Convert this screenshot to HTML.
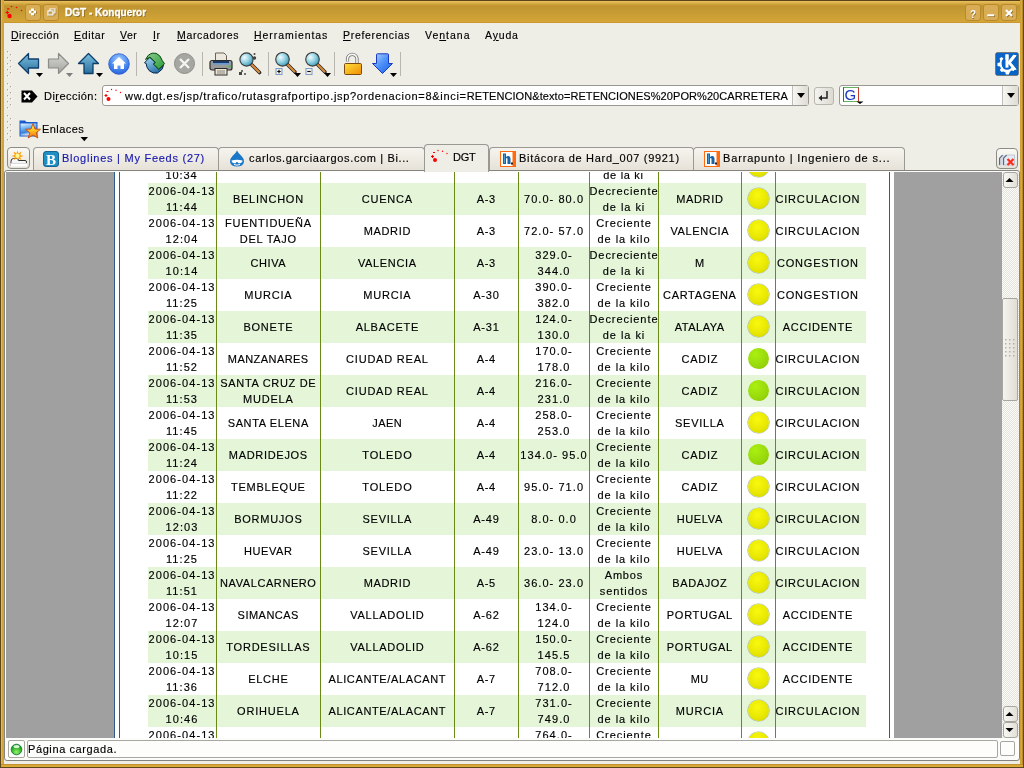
<!DOCTYPE html>
<html><head><meta charset="utf-8">
<style>
*{margin:0;padding:0;box-sizing:border-box}
html,body{width:1024px;height:768px;overflow:hidden;will-change:transform;background:#eeede6;font-family:"Liberation Sans",sans-serif;}
.a{position:absolute}
#title{left:0;top:0;width:1024px;height:23px;background:linear-gradient(#e8c060 0,#e4ba56 1px,#d6aa42 2.5px,#bf942f 5px,#c49a33 10px,#d2a336 19px,#d4a436 21px,#c08c28 22px);border-top:1px solid #5a4418}
.lb{left:0;top:0;width:4px;height:768px;background:linear-gradient(90deg,#5c4818 0,#5c4818 1px,#e2ba58 1px,#e2ba58 2px,#d4a438 2px)}
.rb{left:1020px;top:0;width:4px;height:768px;background:linear-gradient(90deg,#cfa032 0,#cfa032 1px,#d8a838 1px,#d8a838 2px,#b88a2c 2px,#b88a2c 3px,#5c4818 3px)}
.bb{left:1px;top:764px;width:1022px;height:4px;background:linear-gradient(#c49030 0,#c49030 1px,#d8a838 1px,#d8a838 3px,#5c4818 3px)}
.tbtn{top:4px;width:16px;height:17px;border-radius:3px;background:#d8ad55;border:1px solid #b98a2c}
.ttl{left:65px;top:6.5px;-webkit-text-stroke:0.3px #fff;font-weight:bold;font-size:10px;line-height:12px;color:#fff;text-shadow:1px 1px 0 #8a6a22;letter-spacing:0}
.menu{top:29.4px;font-size:10.5px;line-height:12px;color:#000;letter-spacing:0.5px}
.menu u{text-decoration:underline;text-underline-offset:1px}
.sep{top:52px;width:2px;height:24px;border-left:1px solid #bcbab2;border-right:1px solid #fff}
.grip{width:5px;background:repeating-linear-gradient(#c8c6bf 0 1px,transparent 1px 3px)}
/* frame */
#frame{left:4px;top:170px;width:1016px;height:591px;border:1px solid #85847f;border-radius:3px;background:#fcfcfa}
#page{left:6px;top:172px;width:996px;height:566px;background:#a0a0a0;overflow:hidden}
.t{position:absolute;width:140px;text-align:center;font-size:11px;line-height:16px;letter-spacing:0.7px;color:#000;white-space:nowrap;-webkit-text-stroke:0.15px #000}
.t.d{letter-spacing:0.85px}
.rowg{position:absolute;left:148px;width:718px;height:32px;background:#e4f5d8}
.vl{position:absolute;top:0;width:1px;height:768px;background:#6a8a18}
.ball{position:absolute;left:748px;width:21px;height:21px;border-radius:50%;background:radial-gradient(circle at 45% 35%,#f8f810,#e6e600 60%,#cccc00);box-shadow:0 0 0 0.6px #a8b8b8}
.ball.gb{background:radial-gradient(circle at 35% 30%,#aaf010,#98d80c 60%,#88c000);box-shadow:none}

.grip2{width:6px;background-image:radial-gradient(circle at 1px 1px,#b0aea6 0.9px,transparent 1px);background-size:3px 5px}
.sep1{top:52px;width:1px;height:24px;background:#b8b6ae}
.lbl{font-size:11px;letter-spacing:0.45px;color:#000}
.lbl u{text-decoration:underline;text-underline-offset:1px}
.combo{background:#fff;border:1px solid #9a9892;border-radius:3px}
.cbtn{background:linear-gradient(90deg,#f6f5f1,#dedcd4);border-left:1px solid #c0beb6}
.tri{position:absolute;left:4px;top:7px;width:0;height:0;border-left:4px solid transparent;border-right:4px solid transparent;border-top:5px solid #000}
.url{font-size:11px;letter-spacing:0.44px;color:#000;white-space:nowrap;width:666px;overflow:hidden}
.sbtn{border:1px solid #8e8c86;border-radius:4px;background:linear-gradient(#faf9f5,#e4e1d8)}
.tab{top:147px;height:23px;border:1px solid #9a9892;border-bottom:none;border-radius:4px 4px 0 0;background:linear-gradient(#f6f4ee,#e6e2d8)}
.tab.act{top:144px;height:28px;background:#eeede6}
.tabt{top:152px;font-size:11px;letter-spacing:0.7px;color:#000;white-space:nowrap}
.sb{width:15px;border:1px solid #a8a6a0;border-radius:3px;background:linear-gradient(90deg,#f8f7f3,#e2dfd6)}
.thumb{width:16px;border-radius:2px;background:linear-gradient(90deg,#f6f4ee,#e0ddd4)}
.stb{border:1px solid #a8a6a0;border-radius:2px;background:#fdfdfb}
.stt{font-size:11px;letter-spacing:0.6px;color:#000}
.menu,.lbl,.url,.tabt,.stt{-webkit-text-stroke:0.15px currentColor}
#content{position:absolute;left:0;top:0;width:1024px;height:768px}
</style></head><body>
<!-- window frame -->
<div class="a" id="title"></div>
<div class="a lb"></div><div class="a rb"></div><div class="a bb"></div>
<div class="a tbtn" style="left:25px"></div>
<div class="a tbtn" style="left:43px"></div>
<div class="a tbtn" style="left:965px"></div>
<div class="a tbtn" style="left:983px"></div>
<div class="a tbtn" style="left:1001px"></div>
<div class="a ttl">DGT - Konqueror</div>
<svg class="a" style="left:5px;top:5px" width="18" height="14" viewBox="0 0 18 14">
 <circle cx="4.5" cy="11" r="2.2" fill="#f00"/><path d="M0.5 7.5 h3.5 M2.3 5.8 v3.4" stroke="#f00" stroke-width="1.2"/>
 <rect x="2" y="3.3" width="2.5" height="1.2" fill="#f00"/><circle cx="6.5" cy="1.5" r="0.8" fill="#f00"/><circle cx="11.5" cy="2.5" r="0.8" fill="#f00"/><circle cx="16.5" cy="5.5" r="0.8" fill="#f00"/>
</svg>
<svg class="a" style="left:25px;top:4px" width="16" height="16" viewBox="0 0 16 16">
 <path d="M6 4.5 h3 v2 h2 v3 h-2 v2 h-3 v-2 h-2 v-3 h2 Z M6.5 7 v2 h2 v-2 Z" fill="#8a6a22" transform="translate(0.6,0.6)"/>
 <path d="M6 4.5 h3 v2 h2 v3 h-2 v2 h-3 v-2 h-2 v-3 h2 Z M6.5 7 v2 h2 v-2 Z" fill="#fff" fill-rule="evenodd"/>
</svg>
<svg class="a" style="left:43px;top:4px" width="16" height="16" viewBox="0 0 16 16">
 <g transform="translate(0.6,0.6)" fill="none" stroke="#8a6a22" stroke-width="1.2"><rect x="5" y="7" width="5" height="4"/><path d="M7 7 V5 h5 v4 h-2"/></g>
 <g fill="none" stroke="#fff" stroke-width="1.2"><rect x="5" y="7" width="5" height="4"/><path d="M7 7 V5 h5 v4 h-2"/></g>
</svg>
<svg class="a" style="left:965px;top:4.5px" width="16" height="16" viewBox="0 0 16 16">
 <text x="8.6" y="13.6" text-anchor="middle" font-family="Liberation Sans" font-weight="bold" font-size="10" fill="#8a6a22">?</text>
 <text x="8" y="13" text-anchor="middle" font-family="Liberation Sans" font-weight="bold" font-size="10" fill="#fff">?</text>
</svg>
<svg class="a" style="left:983px;top:4.5px" width="16" height="16" viewBox="0 0 16 16">
 <rect x="5" y="10" width="7" height="2" fill="#8a6a22"/><rect x="4.3" y="9.3" width="7" height="2" fill="#fff"/>
</svg>
<svg class="a" style="left:1001px;top:4.5px" width="16" height="16" viewBox="0 0 16 16">
 <path d="M5 5 L11 11 M11 5 L5 11" stroke="#8a6a22" stroke-width="2.2" transform="translate(0.7,0.7)"/>
 <path d="M5 5 L11 11 M11 5 L5 11" stroke="#fff" stroke-width="2.2"/>
</svg>

<!-- menu -->
<div class="a menu" style="left:11px"><u>D</u>irección</div>
<div class="a menu" style="left:74px;letter-spacing:0.67px"><u>E</u>ditar</div>
<div class="a menu" style="left:120px"><u>V</u>er</div>
<div class="a menu" style="left:153px"><u>I</u>r</div>
<div class="a menu" style="left:177px;letter-spacing:0.67px"><u>M</u>arcadores</div>
<div class="a menu" style="left:254px;letter-spacing:0.94px"><u>H</u>erramientas</div>
<div class="a menu" style="left:343px;letter-spacing:0.69px"><u>P</u>referencias</div>
<div class="a menu" style="left:425px;letter-spacing:1.0px">Ve<u>n</u>tana</div>
<div class="a menu" style="left:485px;letter-spacing:0.82px">A<u>y</u>uda</div>
<!-- grips -->
<svg class="a" style="left:6px;top:51px" width="7" height="27" viewBox="0 0 7 27"><rect x="1" y="0" width="1" height="1" fill="#a4a29a"/><rect x="2" y="1" width="1" height="1" fill="#ffffff"/><rect x="1" y="1" width="1" height="1" fill="#d8d6ce"/><rect x="4" y="3" width="1" height="1" fill="#a4a29a"/><rect x="5" y="4" width="1" height="1" fill="#ffffff"/><rect x="4" y="4" width="1" height="1" fill="#d8d6ce"/><rect x="1" y="6" width="1" height="1" fill="#a4a29a"/><rect x="2" y="7" width="1" height="1" fill="#ffffff"/><rect x="1" y="7" width="1" height="1" fill="#d8d6ce"/><rect x="4" y="9" width="1" height="1" fill="#a4a29a"/><rect x="5" y="10" width="1" height="1" fill="#ffffff"/><rect x="4" y="10" width="1" height="1" fill="#d8d6ce"/><rect x="1" y="12" width="1" height="1" fill="#a4a29a"/><rect x="2" y="13" width="1" height="1" fill="#ffffff"/><rect x="1" y="13" width="1" height="1" fill="#d8d6ce"/><rect x="4" y="15" width="1" height="1" fill="#a4a29a"/><rect x="5" y="16" width="1" height="1" fill="#ffffff"/><rect x="4" y="16" width="1" height="1" fill="#d8d6ce"/><rect x="1" y="18" width="1" height="1" fill="#a4a29a"/><rect x="2" y="19" width="1" height="1" fill="#ffffff"/><rect x="1" y="19" width="1" height="1" fill="#d8d6ce"/><rect x="4" y="21" width="1" height="1" fill="#a4a29a"/><rect x="5" y="22" width="1" height="1" fill="#ffffff"/><rect x="4" y="22" width="1" height="1" fill="#d8d6ce"/><rect x="1" y="24" width="1" height="1" fill="#a4a29a"/><rect x="2" y="25" width="1" height="1" fill="#ffffff"/><rect x="1" y="25" width="1" height="1" fill="#d8d6ce"/></svg>
<svg class="a" style="left:6px;top:83px" width="7" height="27" viewBox="0 0 7 27"><rect x="1" y="0" width="1" height="1" fill="#a4a29a"/><rect x="2" y="1" width="1" height="1" fill="#ffffff"/><rect x="1" y="1" width="1" height="1" fill="#d8d6ce"/><rect x="4" y="3" width="1" height="1" fill="#a4a29a"/><rect x="5" y="4" width="1" height="1" fill="#ffffff"/><rect x="4" y="4" width="1" height="1" fill="#d8d6ce"/><rect x="1" y="6" width="1" height="1" fill="#a4a29a"/><rect x="2" y="7" width="1" height="1" fill="#ffffff"/><rect x="1" y="7" width="1" height="1" fill="#d8d6ce"/><rect x="4" y="9" width="1" height="1" fill="#a4a29a"/><rect x="5" y="10" width="1" height="1" fill="#ffffff"/><rect x="4" y="10" width="1" height="1" fill="#d8d6ce"/><rect x="1" y="12" width="1" height="1" fill="#a4a29a"/><rect x="2" y="13" width="1" height="1" fill="#ffffff"/><rect x="1" y="13" width="1" height="1" fill="#d8d6ce"/><rect x="4" y="15" width="1" height="1" fill="#a4a29a"/><rect x="5" y="16" width="1" height="1" fill="#ffffff"/><rect x="4" y="16" width="1" height="1" fill="#d8d6ce"/><rect x="1" y="18" width="1" height="1" fill="#a4a29a"/><rect x="2" y="19" width="1" height="1" fill="#ffffff"/><rect x="1" y="19" width="1" height="1" fill="#d8d6ce"/><rect x="4" y="21" width="1" height="1" fill="#a4a29a"/><rect x="5" y="22" width="1" height="1" fill="#ffffff"/><rect x="4" y="22" width="1" height="1" fill="#d8d6ce"/><rect x="1" y="24" width="1" height="1" fill="#a4a29a"/><rect x="2" y="25" width="1" height="1" fill="#ffffff"/><rect x="1" y="25" width="1" height="1" fill="#d8d6ce"/></svg>
<svg class="a" style="left:6px;top:115px" width="7" height="28" viewBox="0 0 7 28"><rect x="1" y="0" width="1" height="1" fill="#a4a29a"/><rect x="2" y="1" width="1" height="1" fill="#ffffff"/><rect x="1" y="1" width="1" height="1" fill="#d8d6ce"/><rect x="4" y="3" width="1" height="1" fill="#a4a29a"/><rect x="5" y="4" width="1" height="1" fill="#ffffff"/><rect x="4" y="4" width="1" height="1" fill="#d8d6ce"/><rect x="1" y="6" width="1" height="1" fill="#a4a29a"/><rect x="2" y="7" width="1" height="1" fill="#ffffff"/><rect x="1" y="7" width="1" height="1" fill="#d8d6ce"/><rect x="4" y="9" width="1" height="1" fill="#a4a29a"/><rect x="5" y="10" width="1" height="1" fill="#ffffff"/><rect x="4" y="10" width="1" height="1" fill="#d8d6ce"/><rect x="1" y="12" width="1" height="1" fill="#a4a29a"/><rect x="2" y="13" width="1" height="1" fill="#ffffff"/><rect x="1" y="13" width="1" height="1" fill="#d8d6ce"/><rect x="4" y="15" width="1" height="1" fill="#a4a29a"/><rect x="5" y="16" width="1" height="1" fill="#ffffff"/><rect x="4" y="16" width="1" height="1" fill="#d8d6ce"/><rect x="1" y="18" width="1" height="1" fill="#a4a29a"/><rect x="2" y="19" width="1" height="1" fill="#ffffff"/><rect x="1" y="19" width="1" height="1" fill="#d8d6ce"/><rect x="4" y="21" width="1" height="1" fill="#a4a29a"/><rect x="5" y="22" width="1" height="1" fill="#ffffff"/><rect x="4" y="22" width="1" height="1" fill="#d8d6ce"/><rect x="1" y="24" width="1" height="1" fill="#a4a29a"/><rect x="2" y="25" width="1" height="1" fill="#ffffff"/><rect x="1" y="25" width="1" height="1" fill="#d8d6ce"/></svg>
<!-- back -->
<svg class="a" style="left:17px;top:52px" width="28" height="26" viewBox="0 0 28 26">
 <defs>
  <linearGradient id="gb" x1="0" y1="0" x2="0" y2="1"><stop offset="0" stop-color="#7cc0e0"/><stop offset="1" stop-color="#2a6f9e"/></linearGradient>
  <linearGradient id="gg" x1="0" y1="0" x2="0" y2="1"><stop offset="0" stop-color="#d6d6d2"/><stop offset="1" stop-color="#a4a4a0"/></linearGradient>
 </defs>
 <path d="M1.5 11.5 L11.5 1.5 L11.5 7 L21.5 7 L21.5 16 L11.5 16 L11.5 21.5 Z" fill="url(#gb)" stroke="#0f3f6a" stroke-width="1.3" stroke-linejoin="round"/>
 <path d="M19 21 L26 21 L22.5 25 Z" fill="#000"/>
</svg>
<!-- forward -->
<svg class="a" style="left:47px;top:52px" width="28" height="26" viewBox="0 0 28 26">
 <path d="M21.5 11.5 L11.5 1.5 L11.5 7 L1.5 7 L1.5 16 L11.5 16 L11.5 21.5 Z" fill="url(#gg)" stroke="#8c8c88" stroke-width="1.2" stroke-linejoin="round"/>
 <path d="M19 21 L26 21 L22.5 25 Z" fill="#808080"/>
</svg>
<!-- up -->
<svg class="a" style="left:77px;top:52px" width="28" height="26" viewBox="0 0 28 26">
 <path d="M11.5 1.5 L21.5 11.5 L16 11.5 L16 21.5 L7 21.5 L7 11.5 L1.5 11.5 Z" fill="url(#gb)" stroke="#0f3f6a" stroke-width="1.3" stroke-linejoin="round"/>
 <path d="M19 21 L26 21 L22.5 25 Z" fill="#000"/>
</svg>
<!-- home -->
<svg class="a" style="left:108px;top:53px" width="22" height="22" viewBox="0 0 22 22">
 <defs><radialGradient id="gh" cx="0.5" cy="0.3" r="0.7"><stop offset="0" stop-color="#a8d0ff"/><stop offset="0.6" stop-color="#4a8cf0"/><stop offset="1" stop-color="#2a62d8"/></radialGradient></defs>
 <circle cx="11" cy="11" r="10.3" fill="url(#gh)" stroke="#2a5ad0" stroke-width="0.8"/>
 <path d="M11 4 L18 10.5 L16 10.5 L16 16 L12.5 16 L12.5 12.5 L9.5 12.5 L9.5 16 L6 16 L6 10.5 L4 10.5 Z" fill="#fff"/>
</svg>
<div class="a sep1" style="left:136px"></div>
<!-- reload -->
<svg class="a" style="left:142px;top:51px" width="26" height="26" viewBox="0 0 26 26">
 <defs><linearGradient id="grn" x1="0" y1="0" x2="1" y2="1"><stop offset="0" stop-color="#8ccc8c"/><stop offset="1" stop-color="#2a9a3a"/></linearGradient>
 <linearGradient id="blu" x1="0" y1="0" x2="0.6" y2="1"><stop offset="0" stop-color="#a8dcf4"/><stop offset="1" stop-color="#2a70a8"/></linearGradient></defs>
 <path d="M2.5 11.8 L7.8 6.4 L13.3 11.5 L11.3 13 L16.9 18.3 L21.5 14.2 Q21.5 18.5 15.5 22 Q11 23 7 19.5 Q4.2 16 4.2 12.5 Z" fill="url(#blu)" stroke="#06284a" stroke-width="1" stroke-linejoin="round"/>
 <path d="M3.5 8.5 Q6 3 10 2.2 L14 2.3 Q18.5 4 20.3 9.5 L22.5 12.7 L16.9 18.3 L11.5 13.2 L13.5 11.5 L8 6.2 Z" fill="url(#grn)" stroke="#064a10" stroke-width="1" stroke-linejoin="round"/>
</svg>
<!-- stop -->
<svg class="a" style="left:174px;top:53px" width="21" height="21" viewBox="0 0 21 21">
 <circle cx="10.5" cy="10.5" r="10" fill="#a6a6a2" stroke="#8e8e8a" stroke-width="1"/>
 <path d="M6 6 L15 15 M15 6 L6 15" stroke="#f4f4f2" stroke-width="2.4"/>
</svg>
<div class="a sep1" style="left:202px"></div>
<!-- print -->
<svg class="a" style="left:209px;top:52px" width="24" height="24" viewBox="0 0 24 24">
 <path d="M6.5 1 L15 1 L17.5 3.5 L17.5 10 L6.5 10 Z" fill="#ece8de" stroke="#6a6258" stroke-width="1"/>
 <rect x="1" y="8.5" width="22" height="9.5" rx="2" fill="#9a9a9a" stroke="#2a2a2a" stroke-width="1.2"/>
 <rect x="4" y="9" width="16" height="2.2" fill="#1a3a6a"/>
 <rect x="4" y="11" width="16" height="1.6" fill="#6a9ad0"/>
 <rect x="19.5" y="13.5" width="2" height="2" fill="#40c040"/>
 <rect x="6" y="16.5" width="12" height="6.5" fill="#efe6d4" stroke="#2a2a2a" stroke-width="1"/>
 <path d="M8 19 L16 19 M8 21 L16 21" stroke="#6a6a6a" stroke-width="0.8"/>
</svg>
<!-- find -->
<svg class="a" style="left:238px;top:52px" width="24" height="24" viewBox="0 0 24 24">
 <defs><radialGradient id="gl" cx="0.35" cy="0.35" r="0.7"><stop offset="0" stop-color="#f0fcff"/><stop offset="0.5" stop-color="#9ad4e4"/><stop offset="1" stop-color="#3a9ab8"/></radialGradient></defs>
 <path d="M14 13 L21.5 20.5" stroke="#2a2a2a" stroke-width="3.6" stroke-linecap="round"/>
 <path d="M14 13 L21 20" stroke="#d8893a" stroke-width="2.2" stroke-linecap="round"/>
 <circle cx="8.5" cy="7.5" r="6.6" fill="url(#gl)" stroke="#3a3a3a" stroke-width="1.1"/>
 <circle cx="16.5" cy="2" r="1" fill="#444"/><circle cx="16.5" cy="6" r="1.7" fill="#444"/>
 <circle cx="4" cy="19" r="1" fill="#444"/><rect x="1" y="20" width="3" height="3" fill="#444"/><circle cx="7" cy="22" r="1" fill="#444"/>
</svg>
<div class="a sep1" style="left:268px"></div>
<!-- zoom in -->
<svg class="a" style="left:274px;top:52px" width="28" height="26" viewBox="0 0 28 26">
 <path d="M13.5 12.5 L21 20" stroke="#2a2a2a" stroke-width="3.6" stroke-linecap="round"/>
 <path d="M13.5 12.5 L20.5 19.5" stroke="#d8893a" stroke-width="2.2" stroke-linecap="round"/>
 <circle cx="8.5" cy="7.3" r="6.8" fill="url(#gl)" stroke="#3a3a3a" stroke-width="1.1"/>
 <rect x="2" y="16.5" width="6" height="6" fill="#f4f0e8" stroke="#7a9ac8" stroke-width="1"/>
 <path d="M3.3 19.5 L6.7 19.5 M5 17.8 L5 21.2" stroke="#000" stroke-width="1.1"/>
 <path d="M20 21 L27 21 L23.5 25 Z" fill="#000"/>
</svg>
<!-- zoom out -->
<svg class="a" style="left:304px;top:52px" width="28" height="26" viewBox="0 0 28 26">
 <path d="M13.5 12.5 L21 20" stroke="#2a2a2a" stroke-width="3.6" stroke-linecap="round"/>
 <path d="M13.5 12.5 L20.5 19.5" stroke="#d8893a" stroke-width="2.2" stroke-linecap="round"/>
 <circle cx="8.5" cy="7.3" r="6.8" fill="url(#gl)" stroke="#3a3a3a" stroke-width="1.1"/>
 <rect x="2" y="16.5" width="6" height="6" fill="#f4f0e8" stroke="#7a9ac8" stroke-width="1"/>
 <path d="M3.3 19.5 L6.7 19.5" stroke="#000" stroke-width="1.1"/>
 <path d="M20 21 L27 21 L23.5 25 Z" fill="#000"/>
</svg>
<div class="a sep1" style="left:334px"></div>
<!-- lock -->
<svg class="a" style="left:343px;top:52px" width="20" height="24" viewBox="0 0 20 24">
 <defs><linearGradient id="gk" x1="0" y1="0" x2="1" y2="1"><stop offset="0" stop-color="#ffe040"/><stop offset="1" stop-color="#f08c00"/></linearGradient></defs>
 <path d="M4.5 9.5 L4.5 6.5 A4.8 4.8 0 0 1 14 6.5 L14 11.5" fill="none" stroke="#707070" stroke-width="3.2"/>
 <path d="M4.5 9.5 L4.5 6.5 A4.8 4.8 0 0 1 14 6.5 L14 11.5" fill="none" stroke="#f6f6f6" stroke-width="1.6"/>
 <rect x="1.5" y="11.5" width="17" height="11" rx="1.2" fill="url(#gk)" stroke="#7a4a10" stroke-width="1"/>
</svg>
<!-- download -->
<svg class="a" style="left:372px;top:53px" width="27" height="25" viewBox="0 0 27 25">
 <defs><linearGradient id="gd" x1="0" y1="0" x2="1" y2="1"><stop offset="0" stop-color="#b8d8ff"/><stop offset="0.5" stop-color="#4a90f8"/><stop offset="1" stop-color="#1a5ae0"/></linearGradient></defs>
 <path d="M4.5 1.5 Q4.5 0.8 5.5 0.8 L15.5 0.8 Q16.5 0.8 16.5 1.5 L16.5 10.5 L20.5 10.5 L10.5 20.5 L0.5 10.5 L4.5 10.5 Z" fill="url(#gd)" stroke="#1a3ac0" stroke-width="1"/>
 <path d="M18 20 L25 20 L21.5 24 Z" fill="#000"/>
</svg>
<div class="a sep1" style="left:400px"></div>
<!-- KDE logo -->
<svg class="a" style="left:995px;top:52px" width="24" height="24" viewBox="0 0 24 24">
 <rect x="0.5" y="0.5" width="23" height="23" rx="2" fill="#0a64c8" stroke="#6a5a40" stroke-width="0.6"/>
 <path d="M10.5 2.5 L13.5 2.5 L13.5 9 L18.5 2.8 L21.5 3.6 L16 10.5 L21.5 17.5 L18.5 18 L13.5 12 L13.5 15.5 L10.5 15.8 Z" fill="#fff"/>
 <path d="M6.5 5 L8.5 6.5 A7 7 0 0 0 7.5 14.5 A6 6 0 0 0 17 14.8 L19.5 16.5 L19 19 L16 18.5 L14.5 20.5 L13.8 22.5 L10.8 22.5 L10.5 20.5 L8.5 19.5 L6.5 20 L4.8 18 L6 16.3 L5 14.5 L2.5 14 L2.5 11 L4.8 10.5 L5.2 8.5 L4.5 6.5 Z" fill="#fff"/>
 <circle cx="12" cy="12.5" r="5.2" fill="#0a64c8"/>
 <path d="M10.5 2.5 L13.5 2.5 L13.5 9 L18.5 2.8 L21.5 3.6 L16 10.5 L21.5 17.5 L18.5 18 L13.5 12 L13.5 15.5 L10.5 15.8 Z" fill="#fff"/>
</svg>
<!-- location bar -->
<svg class="a" style="left:21px;top:90px" width="17" height="13" viewBox="0 0 17 13">
 <path d="M0.5 0.5 L11 0.5 L16.5 6.5 L11 12.5 L0.5 12.5 Z" fill="#000"/>
 <path d="M3 3 L9 9.5 M9 3 L3 9.5" stroke="#fff" stroke-width="2"/>
</svg>
<div class="a lbl" style="left:44px;top:90px">Di<u>r</u>ección:</div>
<div class="a combo" style="left:102px;top:85px;width:707px;height:21px"></div>
<div class="a cbtn" style="left:792px;top:86px;width:16px;height:19px"><div class="tri"></div></div>
<svg class="a" style="left:104px;top:88px" width="18" height="14" viewBox="0 0 18 14">
 <circle cx="4.5" cy="11" r="2" fill="#f00"/><path d="M0.5 7.5 h3 M2 6 v3" stroke="#f00" stroke-width="1.1"/>
 <rect x="2.5" y="3" width="2" height="1" fill="#f00"/><circle cx="7.5" cy="1.5" r="0.7" fill="#f00"/><circle cx="12" cy="2.3" r="0.7" fill="#f00"/><circle cx="16.5" cy="4.5" r="0.7" fill="#f00"/>
</svg>
<div class="a url" style="left:125px;top:90px"><span style="letter-spacing:0.7px">ww.dgt.es/jsp/trafico/rutasgrafportipo.jsp?ordenacion=8&amp;inci=</span><span style="letter-spacing:0.08px">RETENCION&amp;texto=RETENCIONES%20POR%20CARRETERA</span></div>
<div class="a cbtn" style="left:814px;top:87px;width:20px;height:18px;border-radius:3px;border:1px solid #b8b6ae;background:linear-gradient(90deg,#f4f3ef,#dcdad2)"></div>
<svg class="a" style="left:817px;top:90px" width="14" height="13" viewBox="0 0 14 13"><path d="M10 1 L10 8 L3.5 8" fill="none" stroke="#222" stroke-width="1.5"/><path d="M1.5 8 L5 5 L5 11 Z" fill="#222"/></svg>
<div class="a combo" style="left:839px;top:85px;width:180px;height:21px"></div>
<div class="a cbtn" style="left:1002px;top:86px;width:16px;height:19px"><div class="tri"></div></div>
<svg class="a" style="left:843px;top:87px" width="22" height="17" viewBox="0 0 22 17">
 <rect x="0.5" y="0.5" width="15" height="14" fill="none" stroke="#3aa03a" stroke-width="0.8"/>
 <path d="M15.5 0.5 V15" stroke="#e02020" stroke-width="0.8"/>
 <path d="M0.5 0.5 V14.5" stroke="#2040e0" stroke-width="0.8"/>
 <text x="1.6" y="13" font-family="Liberation Sans" font-size="15" fill="#1a38c0">G</text>
 <path d="M13.5 14.5 L20.5 14.5 L17 17 Z" fill="#000"/>
</svg>
<!-- bookmarks bar -->
<svg class="a" style="left:18px;top:119px" width="24" height="20" viewBox="0 0 24 20">
 <defs><linearGradient id="gf" x1="0" y1="0" x2="0.3" y2="1"><stop offset="0" stop-color="#e8f4ff"/><stop offset="0.45" stop-color="#6ab0f0"/><stop offset="0.75" stop-color="#3a80d8"/><stop offset="1" stop-color="#e8eef8"/></linearGradient>
 <linearGradient id="gst" x1="0" y1="0" x2="0" y2="1"><stop offset="0" stop-color="#fff060"/><stop offset="0.5" stop-color="#ffc020"/><stop offset="1" stop-color="#f07010"/></linearGradient></defs>
 <path d="M1.5 1.5 L7 1.5 L8.5 3 L19.5 3 L19.5 17.5 L1.5 17.5 Z" fill="#1a5ad0"/>
 <path d="M2.5 4.5 L18.5 4.5 L18.5 16.5 L2.5 16.5 Z" fill="url(#gf)"/>
 <path d="M15 4.5 L17 10 L22.5 10.3 L18.2 13.7 L19.8 19 L15 16 L10.2 19 L11.8 13.7 L7.5 10.3 L13 10 Z" fill="url(#gst)" stroke="#c84810" stroke-width="0.9" stroke-linejoin="round"/>
</svg>
<div class="a lbl" style="left:42px;top:122.5px">Enlaces</div>
<svg class="a" style="left:80px;top:137px" width="9" height="5" viewBox="0 0 9 5"><path d="M0.5 0 L8 0 L4.3 4.2 Z" fill="#000"/></svg>
<!-- frame -->
<div class="a" id="frame"></div>
<!-- tab bar -->
<div class="a sbtn" style="left:7px;top:147px;width:23px;height:22px"></div>
<svg class="a" style="left:9px;top:149px" width="19" height="18" viewBox="0 0 19 18">
 <path d="M2 17 L2 12.5 Q2 9.5 4.5 9.5 L7.5 9.5 Q9 9.5 9.5 11 L9.5 11.5 L16 11.5 Q17.5 11.5 17.5 13 L17.5 14" fill="#f8f8f8" stroke="#333" stroke-width="1"/>
 <path d="M1.5 14 L18 14 L18 17.5 L1.5 17.5 Z" fill="#ffffff"/>
 <path d="M1.5 14.3 L18 14.3" stroke="#c8c8c8" stroke-width="0.8"/>
 <path d="M8.5 1.5 L9.5 4.5 L12.5 2.5 L11.2 6 L14.5 7 L11.2 8 L12.2 11 L9.5 9.2 L8.5 12 L7.5 9.2 L4.8 11 L5.8 8 L2.5 7 L5.8 6 L4.5 2.5 L7.5 4.5 Z" fill="#ff9a00"/>
 <circle cx="8.5" cy="6.8" r="2.2" fill="#fff890"/>
</svg>
<div class="a tab" style="left:33px;width:186px"></div>
<div class="a tab" style="left:218px;width:207px"></div>
<div class="a tab" style="left:489px;width:205px"></div>
<div class="a tab" style="left:693px;width:212px"></div>
<div class="a tab act" style="left:424px;width:65px"></div>
<!-- tab icons -->
<svg class="a" style="left:43px;top:151px" width="16" height="16" viewBox="0 0 16 16">
 <rect x="0.5" y="0.5" width="15" height="15" rx="2.5" fill="#1e90c4" stroke="#0a5a8a" stroke-width="0.9"/>
 <text x="8" y="13.5" text-anchor="middle" font-family="Liberation Serif" font-weight="bold" font-size="15" fill="#fff">B</text>
</svg>
<div class="a tabt" style="left:62px;color:#1818b0;letter-spacing:0.74px">Bloglines | My Feeds (27)</div>
<svg class="a" style="left:229px;top:150px" width="16" height="17" viewBox="0 0 16 17">
 <path d="M8 0.5 Q9 3 12.5 6 Q15.5 9 15 12 Q14 16.5 8 16.5 Q2 16.5 1 12 Q0.5 9 3.5 6 Q7 3 8 0.5 Z" fill="#1a78c8"/>
 <path d="M2.5 10.5 Q8 9 13.5 10.5 L13 12.5 Q8 11.5 3 12.5 Z" fill="#fff"/>
 <rect x="4" y="11" width="3.2" height="2.2" rx="0.8" fill="#fff"/><rect x="8.8" y="11" width="3.2" height="2.2" rx="0.8" fill="#fff"/>
 <path d="M5 14.5 Q8 15.8 11 14.5" stroke="#fff" stroke-width="1" fill="none"/>
</svg>
<div class="a tabt" style="left:249px;letter-spacing:0.63px">carlos.garciaargos.com | Bi...</div>
<svg class="a" style="left:430px;top:149px" width="19" height="14" viewBox="0 0 18 14">
 <circle cx="4.5" cy="11" r="2" fill="#f00"/><path d="M0.5 7.5 h3 M2 6 v3" stroke="#f00" stroke-width="1.1"/>
 <rect x="2.5" y="3" width="2" height="1" fill="#f00"/><circle cx="7.5" cy="1.5" r="0.7" fill="#f00"/><circle cx="12" cy="2.3" r="0.7" fill="#f00"/><circle cx="16.5" cy="4.5" r="0.7" fill="#f00"/>
</svg>
<div class="a tabt" style="left:453px;top:151px;letter-spacing:-0.3px">DGT</div>
<svg class="a" style="left:500px;top:151px" width="16" height="16" viewBox="0 0 16 16">
 <rect x="0" y="0" width="16" height="16" fill="#ff6a10"/>
 <rect x="1" y="1" width="11.5" height="14" fill="#fff"/>
 <path d="M3 2.5 H6 V6 Q7 5 8.5 5 Q10.5 5 10.5 7.5 V13 H7.5 V8 Q7.5 7 6.8 7 Q6 7 6 8 V13 H3 Z" fill="#1a62a0"/>
 <rect x="4.2" y="3.5" width="0.8" height="8.5" fill="#58a8e0"/>
 <rect x="11" y="11.5" width="2" height="2" fill="#3a1a08"/>
</svg>
<div class="a tabt" style="left:519px;letter-spacing:0.70px">Bitácora de Hard_007 (9921)</div>
<svg class="a" style="left:704px;top:151px" width="16" height="16" viewBox="0 0 16 16">
 <rect x="0" y="0" width="16" height="16" fill="#ff6a10"/>
 <rect x="1" y="1" width="11.5" height="14" fill="#fff"/>
 <path d="M3 2.5 H6 V6 Q7 5 8.5 5 Q10.5 5 10.5 7.5 V13 H7.5 V8 Q7.5 7 6.8 7 Q6 7 6 8 V13 H3 Z" fill="#1a62a0"/>
 <rect x="4.2" y="3.5" width="0.8" height="8.5" fill="#58a8e0"/>
 <rect x="11" y="11.5" width="2" height="2" fill="#3a1a08"/>
</svg>
<div class="a tabt" style="left:723px;letter-spacing:0.84px">Barrapunto | Ingeniero de s...</div>
<div class="a sbtn" style="left:996px;top:148px;width:22px;height:21px"></div>
<svg class="a" style="left:998px;top:152px" width="18" height="14" viewBox="0 0 18 14">
 <path d="M1.5 13 V6 L4.5 3 H16.5 V13 Z" fill="#d4dae4"/>
 <path d="M5.5 13 V6 L8.5 3 H16.5 V13 Z" fill="#e4eaf2" stroke="#a8b4c8" stroke-width="0.6"/>
 <path d="M1.6 13 V6.2 L4.6 3.2" stroke="#56647e" stroke-width="1.1" fill="none"/>
 <path d="M5.6 13 V6.2 L8.6 3.2" stroke="#56647e" stroke-width="1.1" fill="none"/>
 <path d="M9.5 7 L15.5 13 M15.5 7 L9.5 13" stroke="#ff2a1a" stroke-width="2.2"/>
</svg>

<div class="a" id="page">
  <div class="a" style="left:108px;top:0;width:780px;height:600px;background:#fff;border-left:1px solid #2f5d8a"></div>
  <div class="a" style="left:113px;top:0;width:1px;height:600px;background:#2f5d8a"></div>
  <div class="a" style="left:883px;top:0;width:1px;height:600px;background:#2f5d8a"></div>
  <div class="a" style="left:-6px;top:-172px;width:1024px;height:768px">
<div class="rowg" style="top:183px"></div>
<div class="rowg" style="top:247px"></div>
<div class="rowg" style="top:311px"></div>
<div class="rowg" style="top:375px"></div>
<div class="rowg" style="top:439px"></div>
<div class="rowg" style="top:503px"></div>
<div class="rowg" style="top:567px"></div>
<div class="rowg" style="top:631px"></div>
<div class="rowg" style="top:695px"></div>
<div class="vl" style="left:216px"></div>
<div class="vl" style="left:320px"></div>
<div class="vl" style="left:454px"></div>
<div class="vl" style="left:518px"></div>
<div class="vl" style="left:589px"></div>
<div class="vl" style="left:658px"></div>
<div class="vl" style="left:741px"></div>
<div class="vl" style="left:775px"></div>
<div class="t d" style="left:111.5px;top:151px"><br>10:34</div>
<div class="t" style="left:553.5px;top:151px"><br>de la ki</div>
<div class="ball" style="top:156px"></div>
<div class="t d" style="left:111.5px;top:183px"><span style="letter-spacing:1.077px;margin-right:-1.077px">2006-04-13</span><br><span style="letter-spacing:1.074px;margin-right:-1.074px">11:44</span></div>
<div class="t " style="left:198px;top:191px"><span style="letter-spacing:0.75px;margin-right:-0.75px">BELINCHON</span></div>
<div class="t " style="left:317px;top:191px"><span style="letter-spacing:0.779px;margin-right:-0.779px">CUENCA</span></div>
<div class="t " style="left:416px;top:191px"><span style="letter-spacing:0.665px;margin-right:-0.665px">A-3</span></div>
<div class="t " style="left:483.5px;top:191px"><span style="letter-spacing:1.057px;margin-right:-1.057px">70.0- 80.0</span></div>
<div class="t " style="left:553.5px;top:183px"><span style="letter-spacing:0.937px;margin-right:-0.937px">Decreciente</span><br><span style="letter-spacing:0.961px;margin-right:-0.961px">de la ki</span></div>
<div class="t " style="left:629.5px;top:191px"><span style="letter-spacing:0.665px;margin-right:-0.665px">MADRID</span></div>
<div class="t " style="left:747.5px;top:191px"><span style="letter-spacing:0.836px;margin-right:-0.836px">CIRCULACION</span></div>
<div class="ball" style="top:188px"></div>
<div class="t d" style="left:111.5px;top:215px"><span style="letter-spacing:1.077px;margin-right:-1.077px">2006-04-13</span><br><span style="letter-spacing:1.074px;margin-right:-1.074px">12:04</span></div>
<div class="t " style="left:198px;top:215px"><span style="letter-spacing:0.779px;margin-right:-0.779px">FUENTIDUEÑA</span><br><span style="letter-spacing:0.746px;margin-right:-0.746px">DEL TAJO</span></div>
<div class="t " style="left:317px;top:223px"><span style="letter-spacing:0.665px;margin-right:-0.665px">MADRID</span></div>
<div class="t " style="left:416px;top:223px"><span style="letter-spacing:0.665px;margin-right:-0.665px">A-3</span></div>
<div class="t " style="left:483.5px;top:223px"><span style="letter-spacing:1.057px;margin-right:-1.057px">72.0- 57.0</span></div>
<div class="t " style="left:553.5px;top:215px"><span style="letter-spacing:0.936px;margin-right:-0.936px">Creciente</span><br><span style="letter-spacing:0.957px;margin-right:-0.957px">de la kilo</span></div>
<div class="t " style="left:629.5px;top:223px"><span style="letter-spacing:0.648px;margin-right:-0.648px">VALENCIA</span></div>
<div class="t " style="left:747.5px;top:223px"><span style="letter-spacing:0.836px;margin-right:-0.836px">CIRCULACION</span></div>
<div class="ball" style="top:220px"></div>
<div class="t d" style="left:111.5px;top:247px"><span style="letter-spacing:1.077px;margin-right:-1.077px">2006-04-13</span><br><span style="letter-spacing:1.074px;margin-right:-1.074px">10:14</span></div>
<div class="t " style="left:198px;top:255px"><span style="letter-spacing:0.608px;margin-right:-0.608px">CHIVA</span></div>
<div class="t " style="left:317px;top:255px"><span style="letter-spacing:0.648px;margin-right:-0.648px">VALENCIA</span></div>
<div class="t " style="left:416px;top:255px"><span style="letter-spacing:0.665px;margin-right:-0.665px">A-3</span></div>
<div class="t " style="left:483.5px;top:247px"><span style="letter-spacing:1.079px;margin-right:-1.079px">329.0-</span><br><span style="letter-spacing:1.074px;margin-right:-1.074px">344.0</span></div>
<div class="t " style="left:553.5px;top:247px"><span style="letter-spacing:0.937px;margin-right:-0.937px">Decreciente</span><br><span style="letter-spacing:0.961px;margin-right:-0.961px">de la ki</span></div>
<div class="t " style="left:629.5px;top:255px"><span style="letter-spacing:0.7px;margin-right:-0.7px">M</span></div>
<div class="t " style="left:747.5px;top:255px"><span style="letter-spacing:0.766px;margin-right:-0.766px">CONGESTION</span></div>
<div class="ball" style="top:252px"></div>
<div class="t d" style="left:111.5px;top:279px"><span style="letter-spacing:1.077px;margin-right:-1.077px">2006-04-13</span><br><span style="letter-spacing:1.074px;margin-right:-1.074px">11:25</span></div>
<div class="t " style="left:198px;top:287px"><span style="letter-spacing:0.779px;margin-right:-0.779px">MURCIA</span></div>
<div class="t " style="left:317px;top:287px"><span style="letter-spacing:0.779px;margin-right:-0.779px">MURCIA</span></div>
<div class="t " style="left:416px;top:287px"><span style="letter-spacing:0.809px;margin-right:-0.809px">A-30</span></div>
<div class="t " style="left:483.5px;top:279px"><span style="letter-spacing:1.079px;margin-right:-1.079px">390.0-</span><br><span style="letter-spacing:1.074px;margin-right:-1.074px">382.0</span></div>
<div class="t " style="left:553.5px;top:279px"><span style="letter-spacing:0.936px;margin-right:-0.936px">Creciente</span><br><span style="letter-spacing:0.957px;margin-right:-0.957px">de la kilo</span></div>
<div class="t " style="left:629.5px;top:287px"><span style="letter-spacing:0.679px;margin-right:-0.679px">CARTAGENA</span></div>
<div class="t " style="left:747.5px;top:287px"><span style="letter-spacing:0.766px;margin-right:-0.766px">CONGESTION</span></div>
<div class="ball" style="top:284px"></div>
<div class="t d" style="left:111.5px;top:311px"><span style="letter-spacing:1.077px;margin-right:-1.077px">2006-04-13</span><br><span style="letter-spacing:1.074px;margin-right:-1.074px">11:35</span></div>
<div class="t " style="left:198px;top:319px"><span style="letter-spacing:0.779px;margin-right:-0.779px">BONETE</span></div>
<div class="t " style="left:317px;top:319px"><span style="letter-spacing:0.73px;margin-right:-0.73px">ALBACETE</span></div>
<div class="t " style="left:416px;top:319px"><span style="letter-spacing:0.809px;margin-right:-0.809px">A-31</span></div>
<div class="t " style="left:483.5px;top:311px"><span style="letter-spacing:1.079px;margin-right:-1.079px">124.0-</span><br><span style="letter-spacing:1.074px;margin-right:-1.074px">130.0</span></div>
<div class="t " style="left:553.5px;top:311px"><span style="letter-spacing:0.937px;margin-right:-0.937px">Decreciente</span><br><span style="letter-spacing:0.961px;margin-right:-0.961px">de la ki</span></div>
<div class="t " style="left:629.5px;top:319px"><span style="letter-spacing:0.512px;margin-right:-0.512px">ATALAYA</span></div>
<div class="t " style="left:747.5px;top:319px"><span style="letter-spacing:0.75px;margin-right:-0.75px">ACCIDENTE</span></div>
<div class="ball" style="top:316px"></div>
<div class="t d" style="left:111.5px;top:343px"><span style="letter-spacing:1.077px;margin-right:-1.077px">2006-04-13</span><br><span style="letter-spacing:1.074px;margin-right:-1.074px">11:52</span></div>
<div class="t " style="left:198px;top:351px"><span style="letter-spacing:0.449px;margin-right:-0.449px">MANZANARES</span></div>
<div class="t " style="left:317px;top:351px"><span style="letter-spacing:0.79px;margin-right:-0.79px">CIUDAD REAL</span></div>
<div class="t " style="left:416px;top:351px"><span style="letter-spacing:0.665px;margin-right:-0.665px">A-4</span></div>
<div class="t " style="left:483.5px;top:343px"><span style="letter-spacing:1.079px;margin-right:-1.079px">170.0-</span><br><span style="letter-spacing:1.074px;margin-right:-1.074px">178.0</span></div>
<div class="t " style="left:553.5px;top:343px"><span style="letter-spacing:0.936px;margin-right:-0.936px">Creciente</span><br><span style="letter-spacing:0.957px;margin-right:-0.957px">de la kilo</span></div>
<div class="t " style="left:629.5px;top:351px"><span style="letter-spacing:0.75px;margin-right:-0.75px">CADIZ</span></div>
<div class="t " style="left:747.5px;top:351px"><span style="letter-spacing:0.836px;margin-right:-0.836px">CIRCULACION</span></div>
<div class="ball gb" style="top:348px"></div>
<div class="t d" style="left:111.5px;top:375px"><span style="letter-spacing:1.077px;margin-right:-1.077px">2006-04-13</span><br><span style="letter-spacing:1.074px;margin-right:-1.074px">11:53</span></div>
<div class="t " style="left:198px;top:375px"><span style="letter-spacing:0.674px;margin-right:-0.674px">SANTA CRUZ DE</span><br><span style="letter-spacing:0.779px;margin-right:-0.779px">MUDELA</span></div>
<div class="t " style="left:317px;top:383px"><span style="letter-spacing:0.79px;margin-right:-0.79px">CIUDAD REAL</span></div>
<div class="t " style="left:416px;top:383px"><span style="letter-spacing:0.665px;margin-right:-0.665px">A-4</span></div>
<div class="t " style="left:483.5px;top:375px"><span style="letter-spacing:1.079px;margin-right:-1.079px">216.0-</span><br><span style="letter-spacing:1.074px;margin-right:-1.074px">231.0</span></div>
<div class="t " style="left:553.5px;top:375px"><span style="letter-spacing:0.936px;margin-right:-0.936px">Creciente</span><br><span style="letter-spacing:0.957px;margin-right:-0.957px">de la kilo</span></div>
<div class="t " style="left:629.5px;top:383px"><span style="letter-spacing:0.75px;margin-right:-0.75px">CADIZ</span></div>
<div class="t " style="left:747.5px;top:383px"><span style="letter-spacing:0.836px;margin-right:-0.836px">CIRCULACION</span></div>
<div class="ball gb" style="top:380px"></div>
<div class="t d" style="left:111.5px;top:407px"><span style="letter-spacing:1.077px;margin-right:-1.077px">2006-04-13</span><br><span style="letter-spacing:1.074px;margin-right:-1.074px">11:45</span></div>
<div class="t " style="left:198px;top:415px"><span style="letter-spacing:0.619px;margin-right:-0.619px">SANTA ELENA</span></div>
<div class="t " style="left:317px;top:415px"><span style="letter-spacing:0.512px;margin-right:-0.512px">JAEN</span></div>
<div class="t " style="left:416px;top:415px"><span style="letter-spacing:0.665px;margin-right:-0.665px">A-4</span></div>
<div class="t " style="left:483.5px;top:407px"><span style="letter-spacing:1.079px;margin-right:-1.079px">258.0-</span><br><span style="letter-spacing:1.074px;margin-right:-1.074px">253.0</span></div>
<div class="t " style="left:553.5px;top:407px"><span style="letter-spacing:0.936px;margin-right:-0.936px">Creciente</span><br><span style="letter-spacing:0.957px;margin-right:-0.957px">de la kilo</span></div>
<div class="t " style="left:629.5px;top:415px"><span style="letter-spacing:0.703px;margin-right:-0.703px">SEVILLA</span></div>
<div class="t " style="left:747.5px;top:415px"><span style="letter-spacing:0.836px;margin-right:-0.836px">CIRCULACION</span></div>
<div class="ball" style="top:412px"></div>
<div class="t d" style="left:111.5px;top:439px"><span style="letter-spacing:1.077px;margin-right:-1.077px">2006-04-13</span><br><span style="letter-spacing:1.074px;margin-right:-1.074px">11:24</span></div>
<div class="t " style="left:198px;top:447px"><span style="letter-spacing:0.703px;margin-right:-0.703px">MADRIDEJOS</span></div>
<div class="t " style="left:317px;top:447px"><span style="letter-spacing:0.893px;margin-right:-0.893px">TOLEDO</span></div>
<div class="t " style="left:416px;top:447px"><span style="letter-spacing:0.665px;margin-right:-0.665px">A-4</span></div>
<div class="t " style="left:483.5px;top:447px"><span style="letter-spacing:1.061px;margin-right:-1.061px">134.0- 95.0</span></div>
<div class="t " style="left:553.5px;top:439px"><span style="letter-spacing:0.936px;margin-right:-0.936px">Creciente</span><br><span style="letter-spacing:0.957px;margin-right:-0.957px">de la kilo</span></div>
<div class="t " style="left:629.5px;top:447px"><span style="letter-spacing:0.75px;margin-right:-0.75px">CADIZ</span></div>
<div class="t " style="left:747.5px;top:447px"><span style="letter-spacing:0.836px;margin-right:-0.836px">CIRCULACION</span></div>
<div class="ball gb" style="top:444px"></div>
<div class="t d" style="left:111.5px;top:471px"><span style="letter-spacing:1.077px;margin-right:-1.077px">2006-04-13</span><br><span style="letter-spacing:1.074px;margin-right:-1.074px">11:22</span></div>
<div class="t " style="left:198px;top:479px"><span style="letter-spacing:0.75px;margin-right:-0.75px">TEMBLEQUE</span></div>
<div class="t " style="left:317px;top:479px"><span style="letter-spacing:0.893px;margin-right:-0.893px">TOLEDO</span></div>
<div class="t " style="left:416px;top:479px"><span style="letter-spacing:0.665px;margin-right:-0.665px">A-4</span></div>
<div class="t " style="left:483.5px;top:479px"><span style="letter-spacing:1.057px;margin-right:-1.057px">95.0- 71.0</span></div>
<div class="t " style="left:553.5px;top:471px"><span style="letter-spacing:0.936px;margin-right:-0.936px">Creciente</span><br><span style="letter-spacing:0.957px;margin-right:-0.957px">de la kilo</span></div>
<div class="t " style="left:629.5px;top:479px"><span style="letter-spacing:0.75px;margin-right:-0.75px">CADIZ</span></div>
<div class="t " style="left:747.5px;top:479px"><span style="letter-spacing:0.836px;margin-right:-0.836px">CIRCULACION</span></div>
<div class="ball" style="top:476px"></div>
<div class="t d" style="left:111.5px;top:503px"><span style="letter-spacing:1.077px;margin-right:-1.077px">2006-04-13</span><br><span style="letter-spacing:1.074px;margin-right:-1.074px">12:03</span></div>
<div class="t " style="left:198px;top:511px"><span style="letter-spacing:0.73px;margin-right:-0.73px">BORMUJOS</span></div>
<div class="t " style="left:317px;top:511px"><span style="letter-spacing:0.703px;margin-right:-0.703px">SEVILLA</span></div>
<div class="t " style="left:416px;top:511px"><span style="letter-spacing:0.809px;margin-right:-0.809px">A-49</span></div>
<div class="t " style="left:483.5px;top:511px"><span style="letter-spacing:1.046px;margin-right:-1.046px">8.0- 0.0</span></div>
<div class="t " style="left:553.5px;top:503px"><span style="letter-spacing:0.936px;margin-right:-0.936px">Creciente</span><br><span style="letter-spacing:0.957px;margin-right:-0.957px">de la kilo</span></div>
<div class="t " style="left:629.5px;top:511px"><span style="letter-spacing:0.665px;margin-right:-0.665px">HUELVA</span></div>
<div class="t " style="left:747.5px;top:511px"><span style="letter-spacing:0.836px;margin-right:-0.836px">CIRCULACION</span></div>
<div class="ball" style="top:508px"></div>
<div class="t d" style="left:111.5px;top:535px"><span style="letter-spacing:1.077px;margin-right:-1.077px">2006-04-13</span><br><span style="letter-spacing:1.074px;margin-right:-1.074px">11:25</span></div>
<div class="t " style="left:198px;top:543px"><span style="letter-spacing:0.55px;margin-right:-0.55px">HUEVAR</span></div>
<div class="t " style="left:317px;top:543px"><span style="letter-spacing:0.703px;margin-right:-0.703px">SEVILLA</span></div>
<div class="t " style="left:416px;top:543px"><span style="letter-spacing:0.809px;margin-right:-0.809px">A-49</span></div>
<div class="t " style="left:483.5px;top:543px"><span style="letter-spacing:1.057px;margin-right:-1.057px">23.0- 13.0</span></div>
<div class="t " style="left:553.5px;top:535px"><span style="letter-spacing:0.936px;margin-right:-0.936px">Creciente</span><br><span style="letter-spacing:0.957px;margin-right:-0.957px">de la kilo</span></div>
<div class="t " style="left:629.5px;top:543px"><span style="letter-spacing:0.665px;margin-right:-0.665px">HUELVA</span></div>
<div class="t " style="left:747.5px;top:543px"><span style="letter-spacing:0.836px;margin-right:-0.836px">CIRCULACION</span></div>
<div class="ball" style="top:540px"></div>
<div class="t d" style="left:111.5px;top:567px"><span style="letter-spacing:1.077px;margin-right:-1.077px">2006-04-13</span><br><span style="letter-spacing:1.074px;margin-right:-1.074px">11:51</span></div>
<div class="t " style="left:198px;top:575px"><span style="letter-spacing:0.582px;margin-right:-0.582px">NAVALCARNERO</span></div>
<div class="t " style="left:317px;top:575px"><span style="letter-spacing:0.665px;margin-right:-0.665px">MADRID</span></div>
<div class="t " style="left:416px;top:575px"><span style="letter-spacing:0.665px;margin-right:-0.665px">A-5</span></div>
<div class="t " style="left:483.5px;top:575px"><span style="letter-spacing:1.057px;margin-right:-1.057px">36.0- 23.0</span></div>
<div class="t " style="left:553.5px;top:567px"><span style="letter-spacing:0.787px;margin-right:-0.787px">Ambos</span><br><span style="letter-spacing:0.942px;margin-right:-0.942px">sentidos</span></div>
<div class="t " style="left:629.5px;top:575px"><span style="letter-spacing:0.608px;margin-right:-0.608px">BADAJOZ</span></div>
<div class="t " style="left:747.5px;top:575px"><span style="letter-spacing:0.836px;margin-right:-0.836px">CIRCULACION</span></div>
<div class="ball" style="top:572px"></div>
<div class="t d" style="left:111.5px;top:599px"><span style="letter-spacing:1.077px;margin-right:-1.077px">2006-04-13</span><br><span style="letter-spacing:1.074px;margin-right:-1.074px">12:07</span></div>
<div class="t " style="left:198px;top:607px"><span style="letter-spacing:0.485px;margin-right:-0.485px">SIMANCAS</span></div>
<div class="t " style="left:317px;top:607px"><span style="letter-spacing:0.703px;margin-right:-0.703px">VALLADOLID</span></div>
<div class="t " style="left:416px;top:607px"><span style="letter-spacing:0.809px;margin-right:-0.809px">A-62</span></div>
<div class="t " style="left:483.5px;top:599px"><span style="letter-spacing:1.079px;margin-right:-1.079px">134.0-</span><br><span style="letter-spacing:1.074px;margin-right:-1.074px">124.0</span></div>
<div class="t " style="left:553.5px;top:599px"><span style="letter-spacing:0.936px;margin-right:-0.936px">Creciente</span><br><span style="letter-spacing:0.957px;margin-right:-0.957px">de la kilo</span></div>
<div class="t " style="left:629.5px;top:607px"><span style="letter-spacing:0.73px;margin-right:-0.73px">PORTUGAL</span></div>
<div class="t " style="left:747.5px;top:607px"><span style="letter-spacing:0.75px;margin-right:-0.75px">ACCIDENTE</span></div>
<div class="ball" style="top:604px"></div>
<div class="t d" style="left:111.5px;top:631px"><span style="letter-spacing:1.077px;margin-right:-1.077px">2006-04-13</span><br><span style="letter-spacing:1.074px;margin-right:-1.074px">10:15</span></div>
<div class="t " style="left:198px;top:639px"><span style="letter-spacing:0.779px;margin-right:-0.779px">TORDESILLAS</span></div>
<div class="t " style="left:317px;top:639px"><span style="letter-spacing:0.703px;margin-right:-0.703px">VALLADOLID</span></div>
<div class="t " style="left:416px;top:639px"><span style="letter-spacing:0.809px;margin-right:-0.809px">A-62</span></div>
<div class="t " style="left:483.5px;top:631px"><span style="letter-spacing:1.079px;margin-right:-1.079px">150.0-</span><br><span style="letter-spacing:1.074px;margin-right:-1.074px">145.5</span></div>
<div class="t " style="left:553.5px;top:631px"><span style="letter-spacing:0.936px;margin-right:-0.936px">Creciente</span><br><span style="letter-spacing:0.957px;margin-right:-0.957px">de la kilo</span></div>
<div class="t " style="left:629.5px;top:639px"><span style="letter-spacing:0.73px;margin-right:-0.73px">PORTUGAL</span></div>
<div class="t " style="left:747.5px;top:639px"><span style="letter-spacing:0.75px;margin-right:-0.75px">ACCIDENTE</span></div>
<div class="ball" style="top:636px"></div>
<div class="t d" style="left:111.5px;top:663px"><span style="letter-spacing:1.077px;margin-right:-1.077px">2006-04-13</span><br><span style="letter-spacing:1.074px;margin-right:-1.074px">11:36</span></div>
<div class="t " style="left:198px;top:671px"><span style="letter-spacing:0.75px;margin-right:-0.75px">ELCHE</span></div>
<div class="t " style="left:317px;top:671px"><span style="letter-spacing:0.634px;margin-right:-0.634px">ALICANTE/ALACANT</span></div>
<div class="t " style="left:416px;top:671px"><span style="letter-spacing:0.665px;margin-right:-0.665px">A-7</span></div>
<div class="t " style="left:483.5px;top:663px"><span style="letter-spacing:1.079px;margin-right:-1.079px">708.0-</span><br><span style="letter-spacing:1.074px;margin-right:-1.074px">712.0</span></div>
<div class="t " style="left:553.5px;top:663px"><span style="letter-spacing:0.936px;margin-right:-0.936px">Creciente</span><br><span style="letter-spacing:0.957px;margin-right:-0.957px">de la kilo</span></div>
<div class="t " style="left:629.5px;top:671px"><span style="letter-spacing:0.322px;margin-right:-0.322px">MU</span></div>
<div class="t " style="left:747.5px;top:671px"><span style="letter-spacing:0.75px;margin-right:-0.75px">ACCIDENTE</span></div>
<div class="ball" style="top:668px"></div>
<div class="t d" style="left:111.5px;top:695px"><span style="letter-spacing:1.077px;margin-right:-1.077px">2006-04-13</span><br><span style="letter-spacing:1.074px;margin-right:-1.074px">10:46</span></div>
<div class="t " style="left:198px;top:703px"><span style="letter-spacing:0.811px;margin-right:-0.811px">ORIHUELA</span></div>
<div class="t " style="left:317px;top:703px"><span style="letter-spacing:0.634px;margin-right:-0.634px">ALICANTE/ALACANT</span></div>
<div class="t " style="left:416px;top:703px"><span style="letter-spacing:0.665px;margin-right:-0.665px">A-7</span></div>
<div class="t " style="left:483.5px;top:695px"><span style="letter-spacing:1.079px;margin-right:-1.079px">731.0-</span><br><span style="letter-spacing:1.074px;margin-right:-1.074px">749.0</span></div>
<div class="t " style="left:553.5px;top:695px"><span style="letter-spacing:0.936px;margin-right:-0.936px">Creciente</span><br><span style="letter-spacing:0.957px;margin-right:-0.957px">de la kilo</span></div>
<div class="t " style="left:629.5px;top:703px"><span style="letter-spacing:0.779px;margin-right:-0.779px">MURCIA</span></div>
<div class="t " style="left:747.5px;top:703px"><span style="letter-spacing:0.836px;margin-right:-0.836px">CIRCULACION</span></div>
<div class="ball" style="top:700px"></div>
<div class="t d" style="left:111.5px;top:727px"><span style="letter-spacing:1.077px;margin-right:-1.077px">2006-04-13</span><br></div>



<div class="t " style="left:483.5px;top:727px"><span style="letter-spacing:1.079px;margin-right:-1.079px">764.0-</span><br></div>
<div class="t " style="left:553.5px;top:727px"><span style="letter-spacing:0.936px;margin-right:-0.936px">Creciente</span><br></div>


<div class="ball" style="top:732px"></div>
  </div>
</div>
<!-- vertical scrollbar -->
<div class="a" style="left:1002px;top:172px;width:17px;height:566px;background:#f4f4f0;background-image:repeating-conic-gradient(#e4e2dc 0 25%,#fbfbf8 0 50%);background-size:2px 2px"></div>
<div class="a sb" style="left:1003px;top:172px;height:16px"><svg width="15" height="14" viewBox="0 0 15 14"><path d="M1.5 9 L9.5 9 L5.5 5 Z" fill="#000"/></svg></div>
<div class="a sb thumb" style="left:1002px;top:298px;height:103px"></div>
<svg class="a" style="left:1005px;top:339px" width="10" height="18" viewBox="0 0 10 18"><g fill="#b4b2aa"><rect x="0" y="0" width="1.5" height="1.5"/><rect x="0" y="4" width="1.5" height="1.5"/><rect x="0" y="8" width="1.5" height="1.5"/><rect x="0" y="12" width="1.5" height="1.5"/><rect x="0" y="16" width="1.5" height="1.5"/><rect x="4" y="0" width="1.5" height="1.5"/><rect x="4" y="4" width="1.5" height="1.5"/><rect x="4" y="8" width="1.5" height="1.5"/><rect x="4" y="12" width="1.5" height="1.5"/><rect x="4" y="16" width="1.5" height="1.5"/><rect x="8" y="0" width="1.5" height="1.5"/><rect x="8" y="4" width="1.5" height="1.5"/><rect x="8" y="8" width="1.5" height="1.5"/><rect x="8" y="12" width="1.5" height="1.5"/><rect x="8" y="16" width="1.5" height="1.5"/></g></svg>
<div class="a sb" style="left:1003px;top:706px;height:16px"><svg width="15" height="14" viewBox="0 0 15 14"><path d="M1.5 9 L9.5 9 L5.5 5 Z" fill="#000"/></svg></div>
<div class="a sb" style="left:1003px;top:722px;height:16px"><svg width="15" height="14" viewBox="0 0 15 14"><path d="M1.5 5 L9.5 5 L5.5 9 Z" fill="#000"/></svg></div>

<!-- status bar -->
<div class="a stb" style="left:8px;top:740px;width:17px;height:18px"></div>
<svg class="a" style="left:10px;top:743px" width="13" height="13" viewBox="0 0 13 13">
 <defs><radialGradient id="gs" cx="0.5" cy="0.75" r="0.6"><stop offset="0" stop-color="#98f070"/><stop offset="1" stop-color="#10a010"/></radialGradient></defs>
 <circle cx="6.5" cy="6.5" r="5.3" fill="url(#gs)" stroke="#0a6a3a" stroke-width="0.8"/>
 <ellipse cx="6.5" cy="3.5" rx="3" ry="1.6" fill="#f0fff0" opacity="0.9"/>
</svg>
<div class="a stb" style="left:27px;top:740px;width:971px;height:18px"></div>
<div class="a stt" style="left:28px;top:743px">Página cargada.</div>
<div class="a stb" style="left:1000px;top:741px;width:15px;height:15px"></div>

</body></html>
